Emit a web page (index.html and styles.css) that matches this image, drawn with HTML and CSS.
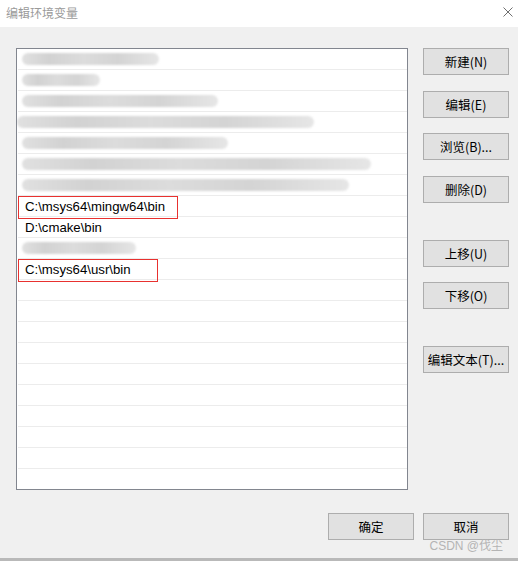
FILE: index.html
```html
<!DOCTYPE html>
<html lang="zh-CN">

<head>
    <meta charset="UTF-8">
    <meta name="viewport" content="width=device-width, initial-scale=1.0">
    <title>编辑环境变量</title>
    <link rel="stylesheet" href="styles.css">
</head>

<body>
    <div class="dialog">
        <div class="title-bar">
            <span class="title">编辑环境变量</span>
            <svg class="close" width="10" height="10" viewBox="0 0 10 10">
                <path d="M0.5 0.5 L9.5 9.5 M9.5 0.5 L0.5 9.5" stroke="#6f6f6f" stroke-width="1" fill="none" />
            </svg>
        </div>

        <div class="content">
            <div class="main">
                <div class="path-list">
                    <!-- 打码的条目 -->
                    <div class="row"><span class="blur" style="width: 137px"></span></div>
                    <div class="row"><span class="blur" style="width: 78px"></span></div>
                    <div class="row"><span class="blur" style="width: 196px"></span></div>
                    <div class="row"><span class="blur wide" style="width: 297px"></span></div>
                    <div class="row"><span class="blur" style="width: 206px"></span></div>
                    <div class="row"><span class="blur" style="width: 349px"></span></div>
                    <div class="row"><span class="blur" style="width: 327px"></span></div>
                    <div class="row">
                        C:\msys64\mingw64\bin
                        <span class="mark" style="width: 160px"></span>
                    </div>
                    <div class="row">D:\cmake\bin</div>
                    <div class="row"><span class="blur" style="width: 114px"></span></div>
                    <div class="row">
                        C:\msys64\usr\bin
                        <span class="mark" style="width: 140px"></span>
                    </div>
                    <div class="row"></div>
                    <div class="row"></div>
                    <div class="row"></div>
                    <div class="row"></div>
                    <div class="row"></div>
                    <div class="row"></div>
                    <div class="row"></div>
                    <div class="row"></div>
                    <div class="row"></div>
                    <div class="row"></div>
                </div>

                <div class="side-buttons">
                    <button class="btn">新建(N)</button>
                    <button class="btn">编辑(E)</button>
                    <button class="btn">浏览(B)...</button>
                    <button class="btn">删除(D)</button>
                    <button class="btn group">上移(U)</button>
                    <button class="btn">下移(O)</button>
                    <button class="btn group">编辑文本(T)...</button>
                </div>
            </div>

            <div class="footer">
                <button class="btn">确定</button>
                <button class="btn">取消</button>
            </div>

            <div class="watermark">CSDN @伐尘</div>
        </div>
    </div>
</body>

</html>
```

FILE: styles.css
```css
body {
    margin: 0;
    background-color: #b9b9b9;
    font-family: "Noto Sans", "Noto Sans CJK SC", sans-serif;
}

.dialog {
    width: 518px;
    height: 558px;
    display: flex;
    flex-direction: column;
    background-color: #f0f0f0;
}

.title-bar {
    height: 27px;
    background-color: #fff;
    display: flex;
    align-items: center;
    justify-content: space-between;
    padding: 0 5px 0 6px;
}

.title {
    font-family: "Noto Sans CJK SC", sans-serif;
    font-size: 12px;
    color: #9a9a9a;
    margin-top: -2px;
}

.close {
    margin-top: -3px;
}

.content {
    flex: 1;
    position: relative;
    padding: 21px 0 0 16px;
}

.main {
    display: flex;
    gap: 15px;
}

.path-list {
    width: 390px;
    height: 440px;
    border: 1px solid #82868f;
    background-color: #fff;
    overflow: hidden;
}

.row {
    position: relative;
    height: 20px;
    margin-left: 1px;
    border-bottom: 1px solid #ececec;
    padding-left: 7px;
    display: flex;
    align-items: center;
    font-family: "Liberation Sans", "Noto Sans CJK SC", sans-serif;
    font-size: 13.2px;
    color: #000;
    white-space: nowrap;
}

/* 打码区域 */
.blur {
    display: block;
    height: 12px;
    margin-left: -3px;
    border-radius: 6px;
    background: linear-gradient(90deg, #e0e0e0 0%, #d2d2d2 20%, #dcdcdc 45%, #d4d4d4 70%, #e6e6e6 100%);
    filter: blur(1px);
}

.blur.wide {
    margin-left: -8px;
}

/* 截图上的红框标注 */
.mark {
    position: absolute;
    z-index: 1;
    left: 0;
    top: 0;
    width: 160px;
    height: 23px;
    border: 1px solid #e8312f;
    box-sizing: border-box;
}

.side-buttons {
    display: flex;
    flex-direction: column;
}

.btn {
    width: 86px;
    height: 27px;
    background-color: #e1e1e1;
    border: 1px solid #adadad;
    font-family: "Noto Sans CJK SC", sans-serif;
    font-size: 12.5px;
    color: #000;
    padding: 0;
}

.side-buttons .btn {
    margin-bottom: 15px;
}

.side-buttons .btn:nth-child(1),
.side-buttons .btn:nth-child(3) {
    margin-bottom: 16px;
}

.btn.group {
    margin-top: 22px;
}

.footer {
    display: flex;
    justify-content: flex-end;
    gap: 9px;
    padding-right: 9px;
    margin-top: 23px;
}

.watermark {
    position: absolute;
    right: 15px;
    bottom: 5px;
    font-size: 12px;
    color: #b4b4b4;
    font-family: "Liberation Sans", "Noto Sans CJK SC", sans-serif;
}
```
